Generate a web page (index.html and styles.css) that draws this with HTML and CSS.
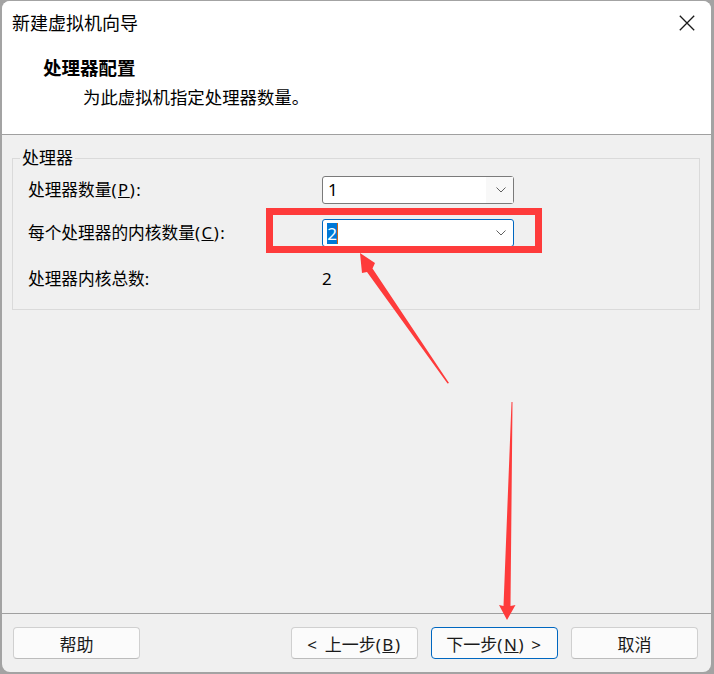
FILE: index.html
```html
<!DOCTYPE html>
<html lang="zh-CN">
<head>
<meta charset="utf-8">
<title>新建虚拟机向导</title>
<link rel="stylesheet" href="styles.css">
</head>
<body>
<div class="window">
  <header class="header">
    <div class="titlebar">
      <span class="title">新建虚拟机向导</span>
      <svg class="close" width="16" height="16" viewBox="0 0 16 16"><path d="M0.8 0.8 L15.2 15.2 M15.2 0.8 L0.8 15.2" stroke="#1a1a1a" stroke-width="1.3" fill="none"/></svg>
    </div>
    <div class="heading">处理器配置</div>
    <div class="subtitle">为此虚拟机指定处理器数量。</div>
  </header>
  <main class="content">
    <section class="group">
      <div class="group-label">处理器</div>
      <div class="rows">
        <div class="label">处理器数量<span class="lat">(<u>P</u>):</span></div>
        <div class="combo">
          <span class="combo-value">1</span>
          <span class="combo-btn"><svg width="10" height="6" viewBox="0 0 10 6"><path d="M0.5 0.5 L5 5 L9.5 0.5" stroke="#606060" stroke-width="1" fill="none"/></svg></span>
        </div>
        <div class="label">每个处理器的内核数量<span class="lat">(<u>C</u>):</span></div>
        <div class="combo focused">
          <span class="combo-value"><span class="sel">2</span><span class="caret"></span></span>
          <span class="combo-btn plain"><svg width="10" height="6" viewBox="0 0 10 6"><path d="M0.5 0.5 L5 5 L9.5 0.5" stroke="#606060" stroke-width="1" fill="none"/></svg></span>
          <div class="callout"></div>
        </div>
        <div class="label r3">处理器内核总数<span class="lat">:</span></div>
        <div class="value r3">2</div>
      </div>
    </section>
  </main>
  <footer class="footer">
    <button class="btn help">帮助</button>
    <button class="btn"><span class="lat">&lt; </span>上一步<span class="lat">(<u>B</u>)</span></button>
    <button class="btn primary">下一步<span class="lat">(<u>N</u>) &gt;</span></button>
    <button class="btn">取消</button>
  </footer>
</div>
<svg class="arrows" width="714" height="674" viewBox="0 0 714 674">
  <polygon points="360,253 375,263 372.5,268.5 449,383 447.5,383.5 367,272 362,273" fill="#fe3b3b"/>
  <polygon points="511.5,402 512.5,402 510.5,606 515.5,605 507,620 499,605 503.5,606" fill="#fe3b3b"/>
</svg>
</body>
</html>
```
FILE: styles.css
```css
html, body {
  margin: 0;
  height: 100%;
}
body {
  background: #a3a3a3;
  position: relative;
  overflow: hidden;
  font-family: "Noto Sans", "Noto Sans CJK SC", sans-serif;
  color: #000;
}
.window {
  margin: 1px 3px 0 2px;
  height: 671px;
  border-radius: 8px;
  background: #f0f0f0;
  display: flex;
  flex-direction: column;
  overflow: hidden;
}
.header {
  height: 134px;
  box-sizing: border-box;
  background: #fff;
  border-bottom: 1px solid #a0a0a0;
}
.titlebar {
  height: 44px;
  display: flex;
  align-items: center;
  justify-content: space-between;
  padding: 0 16px 0 10px;
}
.title {
  font-size: 18px;
  line-height: 1;
}
.close {
  display: block;
}
.heading {
  margin-top: 11px;
  padding-left: 41px;
  font-size: 18.5px;
  font-weight: bold;
  line-height: 24px;
}
.subtitle {
  margin-top: 5px;
  padding-left: 81px;
  font-size: 17.4px;
  line-height: 24px;
}
.content {
  flex: 1;
  padding: 23px 11px 0 10px;
}
.group {
  border: 1px solid #dadada;
  padding: 0 14px 16px 15px;
}
.group-label {
  width: max-content;
  margin-top: -11px;
  margin-left: -8px;
  padding: 0 2px;
  background: #f0f0f0;
  font-size: 17px;
  line-height: 20px;
}
.rows {
  margin-top: 8px;
  display: grid;
  grid-template-columns: 294px 192px;
  row-gap: 15px;
  align-items: center;
}
.label {
  font-size: 16.7px;
  line-height: 28px;
}
.lat {
  letter-spacing: 1.6px;
}
.r3 {
  margin-top: 3px;
}
.value {
  font-size: 17px;
  line-height: 28px;
}
.combo {
  height: 28px;
  box-sizing: border-box;
  border: 1px solid #7a7a7a;
  border-radius: 3px;
  background: #fff;
  display: flex;
  align-items: center;
  position: relative;
}
.combo-value {
  flex: 1;
  padding-left: 5px;
  font-size: 17px;
  line-height: 20px;
  display: flex;
  align-items: center;
}
.combo.focused {
  border-color: #0067c0;
}
.combo.focused .combo-value {
  padding-left: 4px;
}
.sel {
  display: inline-block;
  width: 10px;
  height: 21px;
  line-height: 21px;
  text-align: center;
  background: #0078d7;
  color: #fff;
}
.caret {
  display: inline-block;
  width: 1px;
  height: 21px;
  background: #c8621a;
}
.combo-btn {
  width: 27px;
  align-self: stretch;
  box-sizing: border-box;
  padding-right: 7px;
  background: #f8f8f8;
  display: flex;
  align-items: center;
  justify-content: flex-end;
}
.combo-btn.plain {
  background: transparent;
}
.combo-btn svg {
  display: block;
}
.callout {
  position: absolute;
  left: -57px;
  top: -12px;
  width: 276px;
  height: 45px;
  box-sizing: border-box;
  border: 7px solid #fe3b3b;
  pointer-events: none;
}
.footer {
  border-top: 1px solid #a0a0a0;
  padding: 13px 13px 13px 11px;
  display: flex;
  gap: 13px;
}
.btn {
  width: 127px;
  height: 32px;
  box-sizing: border-box;
  border: 1px solid #d0d0d0;
  border-bottom-color: #bcbcbc;
  border-radius: 4px;
  background: #fbfbfb;
  font-family: inherit;
  font-size: 17px;
  color: #1a1a1a;
  padding: 0;
}
.btn.help {
  margin-right: auto;
}
.btn.primary {
  border-color: #0067c0;
}
.arrows {
  position: absolute;
  left: 0;
  top: 0;
  pointer-events: none;
}
```
